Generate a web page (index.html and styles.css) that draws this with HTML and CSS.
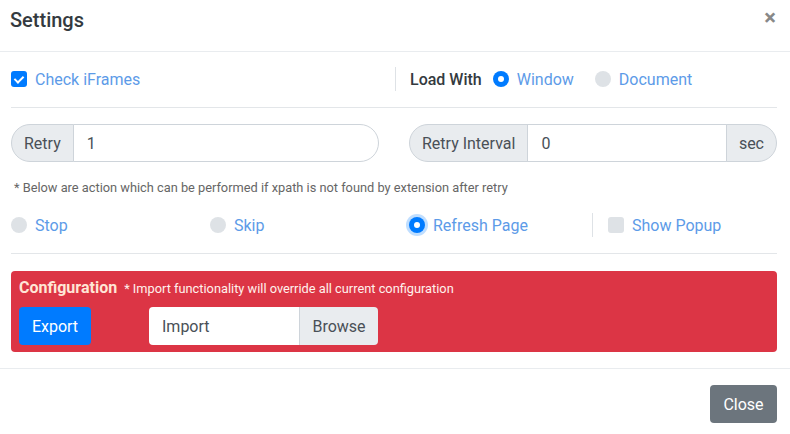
FILE: index.html
```html
<!DOCTYPE html>
<html lang="en">
<head>
    <meta charset="UTF-8">
    <title>Settings</title>
    <link rel="stylesheet" href="styles.css">
</head>
<body>
    <div class="modal">
        <div class="modal-header">
            <h5 class="modal-title">Settings</h5>
            <span class="close-x">&times;</span>
        </div>

        <div class="modal-body">
            <!-- iframe + load mode -->
            <div class="row-top">
                <div class="col-left">
                    <label class="ctrl"><span class="box checked"></span><span class="lbl">Check iFrames</span></label>
                </div>
                <div class="col-right">
                    <span class="load-with">Load With</span>
                    <label class="ctrl"><span class="dot checked"></span><span class="lbl">Window</span></label>
                    <label class="ctrl doc"><span class="dot"></span><span class="lbl">Document</span></label>
                </div>
            </div>
            <hr>

            <div class="retry-row">
                <div class="input-group">
                    <span class="addon first">Retry</span>
                    <span class="field last">1</span>
                </div>
                <div class="input-group">
                    <span class="addon first">Retry Interval</span>
                    <span class="field">0</span>
                    <span class="addon last">sec</span>
                </div>
            </div>

            <p class="note">* Below are action which can be performed if xpath is not found by extension after retry</p>

            <div class="action-row">
                <label class="ctrl"><span class="dot"></span><span class="lbl">Stop</span></label>
                <label class="ctrl"><span class="dot"></span><span class="lbl">Skip</span></label>
                <label class="ctrl"><span class="dot checked focus"></span><span class="lbl">Refresh Page</span></label>
                <div class="popup-col">
                    <label class="ctrl"><span class="box"></span><span class="lbl">Show Popup</span></label>
                </div>
            </div>
            <hr>

            <div class="config-box">
                <div class="config-head">
                    <strong>Configuration</strong>
                    <small>* Import functionality will override all current configuration</small>
                </div>
                <div class="config-actions">
                    <button class="btn btn-primary">Export</button>
                    <div class="file-group">
                        <span class="file-name">Import</span>
                        <span class="file-btn">Browse</span>
                    </div>
                </div>
            </div>
        </div>

        <div class="modal-footer">
            <button class="btn btn-secondary">Close</button>
        </div>
    </div>
</body>
</html>
```

FILE: styles.css
```css
* {
    box-sizing: border-box;
}
body {
    margin: 0;
    font-family: Roboto, "Liberation Sans", sans-serif;
    font-size: 16px;
    color: #212529;
    background: #fff;
}
.modal {
    width: 790px;
}
.modal-header {
    height: 52px;
    padding: 8px 14px 0 10px;
    display: flex;
    justify-content: space-between;
    border-bottom: 1px solid #e9ecef;
}
.modal-title {
    margin: 0;
    font-size: 20px;
    font-weight: 500;
    line-height: 24px;
    color: #343a40;
}
.close-x {
    font-size: 22px;
    font-weight: 700;
    line-height: 20px;
    color: #888;
}
.modal-body {
    padding: 15px 13px 16px 11px;
}
hr {
    margin: 16px 0;
    border: 0;
    border-top: 1px solid #e3e6e9;
}

/* custom checkbox / radio */
.ctrl {
    display: inline-flex;
    align-items: center;
    gap: 8px;
    height: 24px;
}
.lbl {
    color: #5d9be8;
}
.box, .dot {
    width: 16px;
    height: 16px;
    background: #dee2e6;
    flex: none;
    position: relative;
}
.box {
    border-radius: 3px;
}
.dot {
    border-radius: 50%;
}
.box.checked, .dot.checked {
    background: #007bff;
}
.box.checked::after {
    content: "";
    position: absolute;
    left: 5px;
    top: 3px;
    width: 4px;
    height: 7px;
    border: solid #fff;
    border-width: 0 2px 2px 0;
    transform: rotate(45deg);
}
.dot.checked::after {
    content: "";
    position: absolute;
    left: 5px;
    top: 5px;
    width: 6px;
    height: 6px;
    border-radius: 50%;
    background: #fff;
}
.dot.focus {
    box-shadow: 0 0 0 3px rgba(0, 123, 255, 0.25);
}

.row-top {
    display: flex;
    height: 24px;
}
.col-left {
    width: 384px;
}
.col-right {
    border-left: 1px solid #dee2e6;
    padding-left: 14px;
    display: flex;
    align-items: center;
    gap: 8px;
}
.load-with {
    font-weight: 500;
    color: #343a40;
    margin-right: 3px;
}
.ctrl.doc {
    margin-left: 13px;
}

/* retry inputs */
.retry-row {
    display: grid;
    grid-template-columns: 368px 368px;
    gap: 30px;
}
.input-group {
    display: flex;
    height: 38px;
    color: #495057;
}
.addon, .field {
    display: flex;
    align-items: center;
    border: 1px solid #ced4da;
    padding: 0 12px;
}
.addon {
    background: #e9ecef;
}
.field {
    flex: 1;
    background: #fff;
    padding-left: 13px;
    margin-left: -1px;
}
.addon.last {
    margin-left: -1px;
}
.first {
    border-radius: 19px 0 0 19px;
}
.last {
    border-radius: 0 19px 19px 0;
}
.note {
    margin: 16px 0 16px 3px;
    font-size: 12.8px;
    line-height: 19px;
    color: #666;
}

.action-row {
    display: grid;
    grid-template-columns: 199px 199px 183px 1fr;
    height: 24px;
}
.popup-col {
    border-left: 1px solid #dee2e6;
    padding-left: 15px;
}

/* configuration panel */
.config-box {
    background: #dc3545;
    border-radius: 4px;
    padding: 5px 8px 7px;
    margin-top: 17px;
}
.config-head {
    line-height: 24px;
    display: flex;
    align-items: baseline;
    gap: 7px;
}
.config-head strong {
    color: #ffe6d6;
    font-weight: 700;
}
.config-head small {
    color: #fff1ec;
    font-size: 12.8px;
}
.config-actions {
    display: flex;
    margin-top: 6px;
}
.btn {
    border: none;
    border-radius: 4px;
    height: 38px;
    padding: 0 12px;
    font-family: inherit;
    font-size: 16px;
    color: #fff;
}
.btn-primary {
    background: #007bff;
    width: 72px;
}
.btn-secondary {
    background: #6c757d;
    width: 67px;
}
.file-group {
    display: flex;
    margin-left: 58px;
    height: 38px;
    color: #495057;
}
.file-name {
    width: 150px;
    background: #fff;
    border-radius: 4px 0 0 4px;
    padding: 0 13px;
    display: flex;
    align-items: center;
}
.file-btn {
    width: 79px;
    background: #e9ecef;
    border-left: 1px solid #ced4da;
    border-radius: 0 4px 4px 0;
    display: flex;
    align-items: center;
    justify-content: center;
}

.modal-footer {
    border-top: 1px solid #e9ecef;
    padding: 16px 13px 12px;
    display: flex;
    justify-content: flex-end;
}
```
